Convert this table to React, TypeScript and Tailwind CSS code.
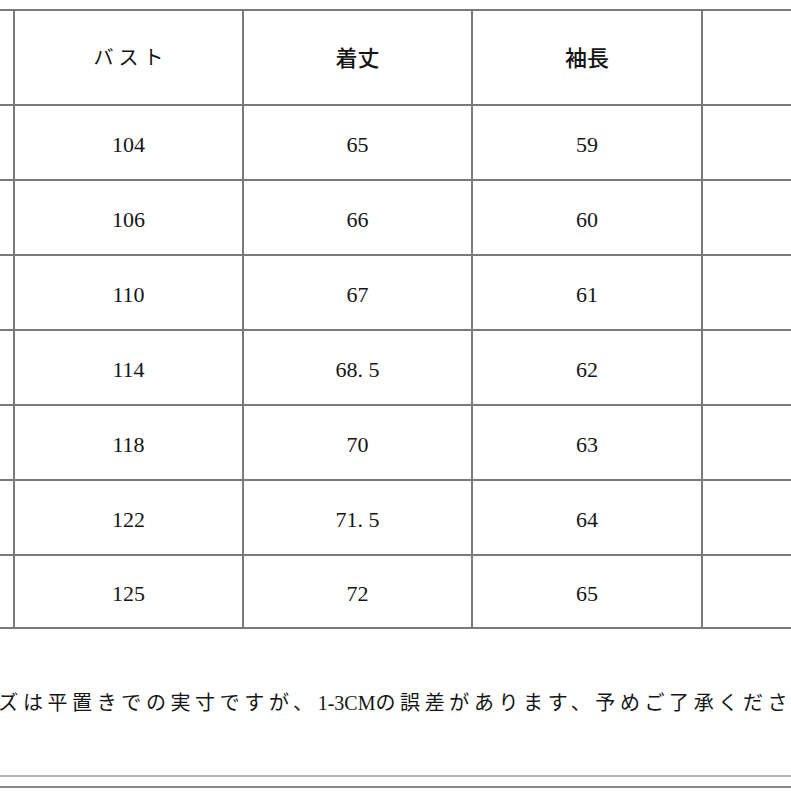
const rows: [string, string, string][] = [
  ["104", "65", "59"],
  ["106", "66", "60"],
  ["110", "67", "61"],
  ["114", "68. 5", "62"],
  ["118", "70", "63"],
  ["122", "71. 5", "64"],
  ["125", "72", "65"],
];

const jp = "font-['Noto_Sans_CJK_JP',sans-serif]";
const num = "font-['Liberation_Serif','Times_New_Roman',serif]";

function Row({
  cells,
  height,
  last,
}: {
  cells: React.ReactNode[];
  height: string;
  last?: boolean;
}) {
  return (
    <div
      className={`grid grid-cols-[13px_229px_229px_230px_1fr] border-t-2 border-[#7a7a7a] ${height} ${
        last ? "border-b-2" : ""
      }`}
    >
      <div />
      {cells.map((c, i) => (
        <div
          key={i}
          className="flex items-center justify-center border-l-2 border-[#7a7a7a]"
        >
          {c}
        </div>
      ))}
      <div className="border-l-2 border-[#7a7a7a]" />
    </div>
  );
}

export default function App() {
  return (
    <div className="w-[791px] h-[791px] bg-white overflow-hidden text-[#151515] pt-[9px]">
      <Row
        height="h-[95px]"
        cells={[
          <span
            key="a"
            className={`${jp} text-[20px] tracking-[5px] pl-[5px] pb-[2px]`}
          >
            バスト
          </span>,
          <span key="b" className={`${jp} text-[22px] font-medium pb-[2px]`}>
            着丈
          </span>,
          <span key="c" className={`${jp} text-[22px] font-medium pb-[2px]`}>
            袖長
          </span>,
        ]}
      />
      {rows.map((r, i) => (
        <Row
          key={r[0]}
          height="h-[75px]"
          last={i === rows.length - 1}
          cells={r.map((v) => (
            <span key={v} className={`${num} text-[22px] pt-[3px]`}>
              {v}
            </span>
          ))}
        />
      ))}
      <div className="h-[146px] flex items-center justify-center overflow-hidden">
        <p
          className={`${jp} whitespace-nowrap text-[20px] tracking-[4.6px] shrink-0`}
        >
          サイズは平置きでの実寸ですが、
          <span className={`${num} text-[20px] tracking-normal`}>1-3CM</span>
          の誤差があります、予めご了承ください。
        </p>
      </div>
      <div className="h-[2px] bg-[#b4b4b4]" />
      <div className="h-[9px]" />
      <div className="h-[2px] bg-[#8a8a8a]" />
    </div>
  );
}
